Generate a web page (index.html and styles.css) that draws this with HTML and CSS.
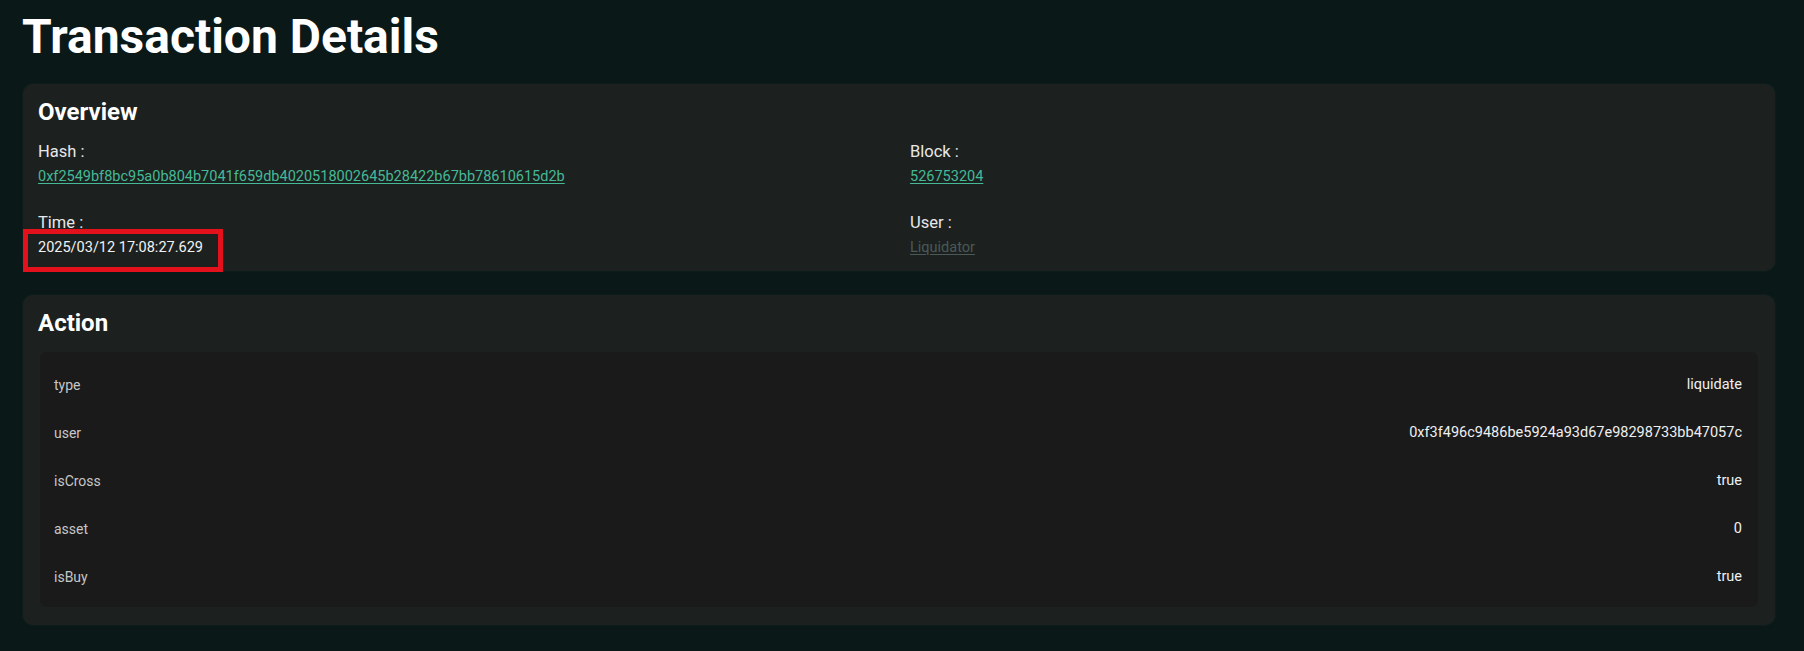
FILE: index.html
```html
<!DOCTYPE html>
<html lang="en">
<head>
  <meta charset="UTF-8">
  <meta name="viewport" content="width=device-width, initial-scale=1.0">
  <title>Transaction Details</title>
  <link rel="stylesheet" href="styles.css">
</head>
<body>
  <main class="page">
    <h1>Transaction Details</h1>

    <section class="card">
      <h2>Overview</h2>
      <div class="overview-grid">
        <div class="field">
          <div class="field-label">Hash :</div>
          <a class="field-value link" href="#">0xf2549bf8bc95a0b804b7041f659db4020518002645b28422b67bb78610615d2b</a>
        </div>
        <div class="field">
          <div class="field-label">Block :</div>
          <a class="field-value link" href="#">526753204</a>
        </div>
        <div class="field">
          <div class="field-label">Time :</div>
          <div class="field-value time">
            2025/03/12 17:08:27.629
            <span class="marker"></span>
          </div>
        </div>
        <div class="field">
          <div class="field-label">User :</div>
          <a class="field-value link muted" href="#">Liquidator</a>
        </div>
      </div>
    </section>

    <section class="card action">
      <h2>Action</h2>
      <div class="action-table">
        <div class="action-row"><span class="key">type</span><span class="val">liquidate</span></div>
        <div class="action-row"><span class="key">user</span><span class="val">0xf3f496c9486be5924a93d67e98298733bb47057c</span></div>
        <div class="action-row"><span class="key">isCross</span><span class="val">true</span></div>
        <div class="action-row"><span class="key">asset</span><span class="val">0</span></div>
        <div class="action-row"><span class="key">isBuy</span><span class="val">true</span></div>
      </div>
    </section>
  </main>
</body>
</html>
```

FILE: styles.css
```css
body {
  font-family: Roboto, 'Noto Sans', 'Liberation Sans', sans-serif;
  background-color: #0a1918;
  color: #ececec;
  margin: 0;
  padding: 0;
}

.page {
  padding: 8px 29px 30px 23px;
}

h1 {
  font-size: 48px;
  font-weight: 700;
  line-height: 57.6px;
  margin: 0 0 18px -1px;
  color: #ffffff;
}

.card {
  background-color: #1c2120;
  border-radius: 10px;
  padding: 14px 17px 12px 15px;
  margin-bottom: 24px;
  box-shadow: 0 0 3px rgba(40, 60, 55, 0.35);
}

.card h2 {
  font-size: 24px;
  font-weight: 700;
  line-height: 28.8px;
  margin: 0 0 14px;
  color: #ffffff;
}

.card.action {
  padding-bottom: 15px;
}

.overview-grid {
  display: grid;
  grid-template-columns: 1fr 1fr;
  gap: 23px 24px;
}

.field {
  display: flex;
  flex-direction: column;
  align-items: flex-start;
}

.field-label {
  font-size: 16.5px;
  line-height: 24px;
  color: #e8e8e8;
}

.field-value {
  font-size: 14.5px;
  line-height: 22px;
  margin-top: 2px;
}

.link {
  color: #45b995;
  text-decoration: underline;
  text-underline-offset: 2px;
}

.link.muted {
  color: #4a5955;
}

.time {
  position: relative;
  color: #f2f2f2;
}

/* red frame drawn around the timestamp */
.marker {
  position: absolute;
  left: -15px;
  top: -8px;
  width: 200px;
  height: 43px;
  border: 5px solid #e3111b;
  box-sizing: border-box;
}

.action-table {
  background-color: #1a1a1a;
  border-radius: 6px;
  margin: 4px 0 3px 2px;
  padding: 9px 16px 6px 14px;
}

.action-row {
  display: flex;
  justify-content: space-between;
  align-items: center;
  height: 48px;
  line-height: 48px;
}

.key {
  font-size: 14px;
  color: #c6c6c6;
}

.val {
  font-size: 14.5px;
  color: #efefef;
}
```
